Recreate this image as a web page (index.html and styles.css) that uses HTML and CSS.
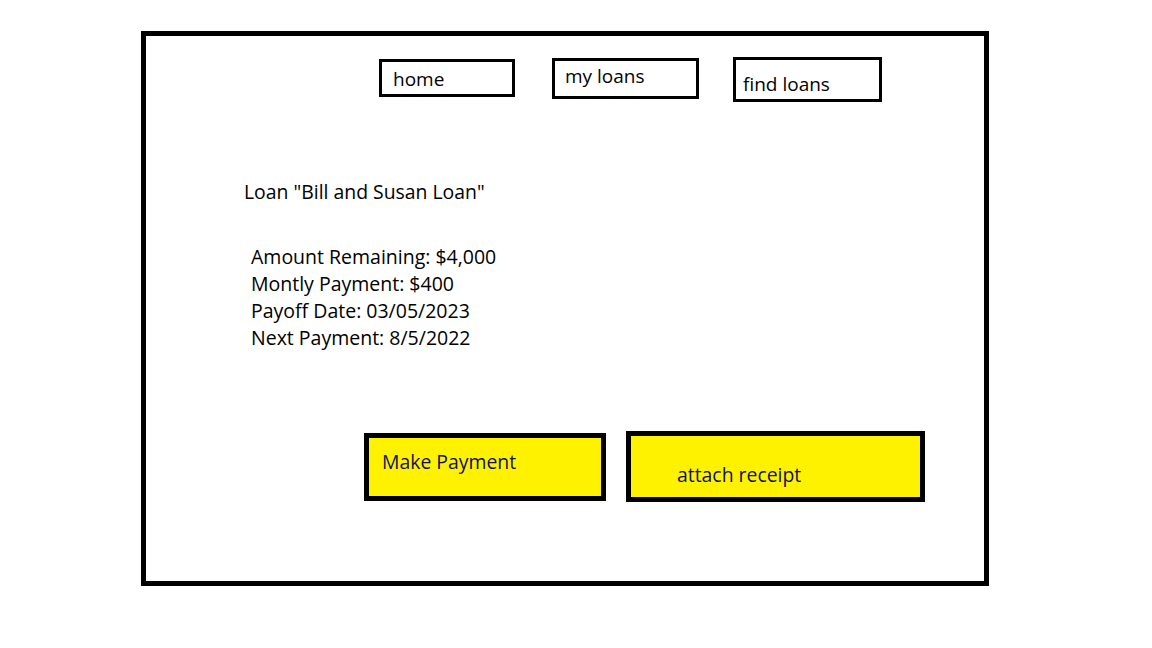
FILE: index.html
```html
<!DOCTYPE html>
<html lang="en">
<head>
<meta charset="utf-8">
<title>Loan details</title>
<link rel="stylesheet" href="styles.css">
</head>
<body>
<div class="frame">
  <nav class="nav">
    <a class="nav-box nav-home">home</a>
    <a class="nav-box nav-my">my loans</a>
    <a class="nav-box nav-find">find loans</a>
  </nav>
  <h1 class="title">Loan "Bill and Susan Loan"</h1>
  <div class="details">
    <div>Amount Remaining: $4,000</div>
    <div>Montly Payment: $400</div>
    <div>Payoff Date: 03/05/2023</div>
    <div>Next Payment: 8/5/2022</div>
  </div>
  <div class="actions">
    <button class="action action-pay">Make Payment</button>
    <button class="action action-receipt">attach receipt</button>
  </div>
</div>
</body>
</html>
```
FILE: styles.css
```css
html, body {
  margin: 0;
  padding: 0;
  background: #ffffff;
}

body {
  font-family: "Open Sans", "Liberation Sans", sans-serif;
  color: #000000;
}

.frame {
  box-sizing: border-box;
  width: 848px;
  height: 555px;
  margin: 31px 0 0 141px;
  border: 5px solid #000000;
}

.nav {
  display: flex;
  align-items: flex-start;
  padding-left: 233px;
}

.nav-box {
  box-sizing: border-box;
  display: block;
  border: 3px solid #000000;
  font-size: 19px;
  line-height: 24px;
  color: #000000;
  text-decoration: none;
}

.nav-home {
  width: 136px;
  margin-top: 23px;
  padding: 5px 0 3px 11px;
}

.nav-my {
  width: 147px;
  margin-top: 22px;
  margin-left: 37px;
  padding: 3px 0 8px 10px;
}

.nav-find {
  width: 149px;
  margin-top: 21px;
  margin-left: 34px;
  padding: 12px 0 3px 7px;
}

.title {
  margin: 78px 0 0 98px;
  font-size: 19.4px;
  line-height: 24px;
  font-weight: normal;
}

.details {
  margin: 39px 0 0 105px;
  font-size: 19.5px;
  line-height: 27px;
}

.actions {
  display: flex;
  align-items: flex-start;
  gap: 20px;
  margin: 80px 0 0 218px;
}

.action {
  box-sizing: border-box;
  display: block;
  border: 5px solid #000000;
  background: #fff200;
  color: #101060;
  font-family: "Open Sans", "Liberation Sans", sans-serif;
  font-size: 19.4px;
  line-height: 24px;
  text-align: left;
  margin: 0;
  cursor: pointer;
}

.action-pay {
  width: 242px;
  height: 68px;
  margin-top: 2px;
  padding: 12px 0 22px 13px;
}

.action-receipt {
  width: 299px;
  height: 71px;
  padding: 27px 0 10px 46px;
}
```
